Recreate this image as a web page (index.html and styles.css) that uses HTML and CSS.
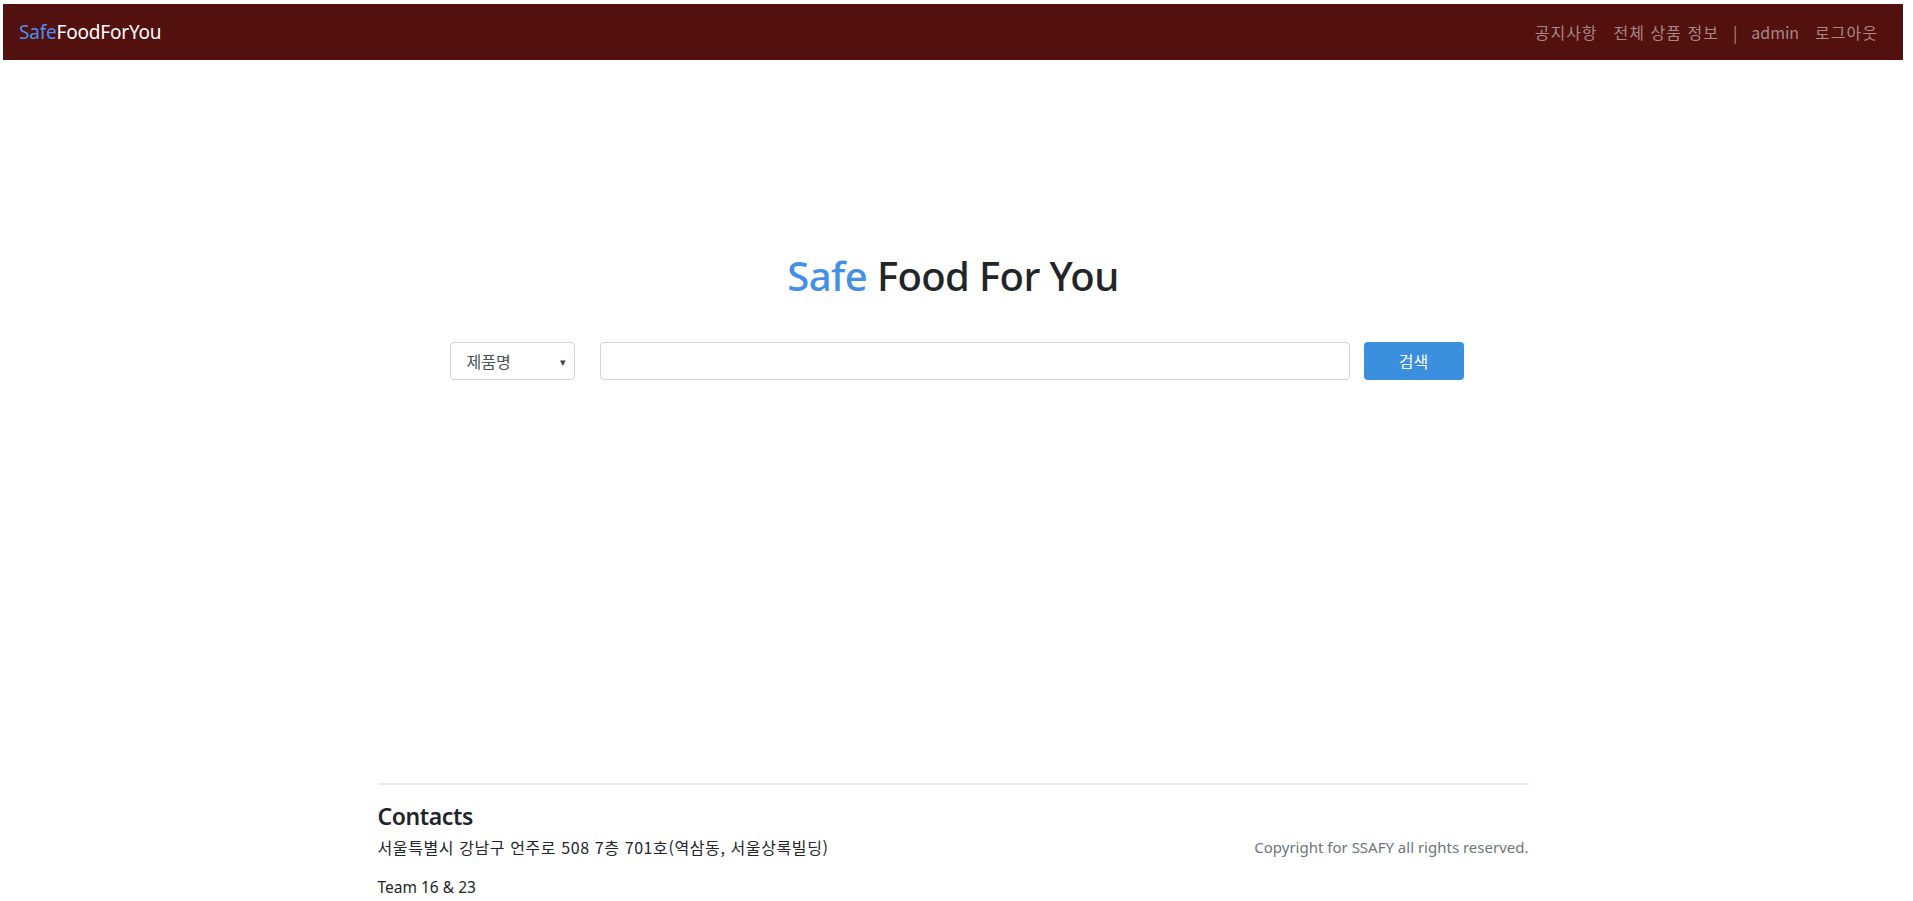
FILE: index.html
```html
<!DOCTYPE html>
<html lang="ko">
<head>
<meta charset="utf-8">
<title>SafeFoodForYou</title>
<link rel="stylesheet" href="styles.css">
</head>
<body>
<div class="page">
  <nav class="navbar">
    <a class="brand" href="#"><span class="blue">Safe</span>FoodForYou</a>
    <ul class="nav-links">
      <li><a class="ko" href="#">공지사항</a></li>
      <li><a class="ko" href="#">전체 상품 정보</a></li>
      <li class="sep">|</li>
      <li><a href="#">admin</a></li>
      <li><a class="ko" href="#">로그아웃</a></li>
    </ul>
  </nav>

  <main class="main">
    <h1 class="title"><span class="blue">Safe</span> Food For You</h1>
    <form class="search">
      <div class="select">
        <span>제품명</span>
        <span class="caret">&#9662;</span>
      </div>
      <input class="search-input" type="text">
      <button class="btn" type="button">검색</button>
    </form>
  </main>

  <footer class="footer">
    <div class="footer-inner">
      <div class="contacts">
        <h4>Contacts</h4>
        <p class="addr">서울특별시 강남구 언주로 508 7층 701호(역삼동, 서울상록빌딩)</p>
        <p class="team">Team 16 &amp; 23</p>
      </div>
      <p class="copy">Copyright for SSAFY all rights reserved.</p>
    </div>
  </footer>
</div>
</body>
</html>
```

FILE: styles.css
```css
* { box-sizing: border-box; }
html, body { margin: 0; padding: 0; background: #fff; }
body {
  font-family: "Noto Sans", "Noto Sans CJK KR", sans-serif;
  color: #212529;
  font-size: 16px;
}
.page {
  padding: 4px 10px 0 3px;
}
.blue { color: #4390e6; }

.navbar {
  height: 56px;
  background: #52100e;
  display: flex;
  align-items: center;
  justify-content: space-between;
  padding: 0 25px 0 16px;
}
.brand {
  color: #fff;
  text-decoration: none;
  font-size: 19px;
  letter-spacing: -0.2px;
}
.brand .blue { color: #4a8ff0; }
.nav-links {
  list-style: none;
  margin: 0;
  padding: 0;
  display: flex;
  align-items: center;
  gap: 16px;
  font-family: "Noto Sans CJK KR", "Noto Sans", sans-serif;
  font-size: 16px;
}
.nav-links a, .nav-links .sep {
  color: #a98887;
  text-decoration: none;
}
.nav-links .ko { letter-spacing: 1px; }
.nav-links .sep { margin: 0 -2px; }

.main {
  height: 723px;
  padding-top: 192px;
  display: flex;
  flex-direction: column;
  align-items: center;
}
.title {
  margin: 0;
  font-size: 40px;
  font-weight: 500;
  line-height: 48px;
  letter-spacing: -0.6px;
}
.search {
  margin-top: 42px;
  display: flex;
  align-items: center;
  margin-left: 7px;
}
.select {
  width: 125px;
  height: 38px;
  border: 1px solid #ced4da;
  border-radius: 4px;
  display: flex;
  align-items: center;
  justify-content: space-between;
  padding: 0 8px 0 16px;
  font-family: "Noto Sans CJK KR", sans-serif;
  font-size: 16px;
  color: #495057;
}
.caret { font-size: 11px; color: #444; }
.search-input {
  margin-left: 25px;
  width: 750px;
  height: 38px;
  border: 1px solid #ced4da;
  border-radius: 4px;
  outline: none;
}
.btn {
  margin-left: 14px;
  width: 100px;
  height: 38px;
  border: none;
  border-radius: 4px;
  background: #3b8fdf;
  color: #fff;
  font-family: "Noto Sans CJK KR", sans-serif;
  font-size: 16px;
}

.footer {
  display: flex;
  justify-content: center;
}
.footer-inner {
  width: 1151px;
  border-top: 2px solid #e9ecef;
  display: flex;
  justify-content: space-between;
  align-items: flex-start;
  padding-top: 17px;
}
.contacts h4 {
  margin: 0;
  font-size: 23px;
  font-weight: 600;
  line-height: 28px;
  letter-spacing: -0.4px;
}
.addr {
  margin: 5px 0 0;
  font-family: "Noto Sans CJK KR", "Noto Sans", sans-serif;
  font-size: 16px;
  letter-spacing: 0.6px;
  line-height: 24px;
}
.team {
  margin: 16px 0 0;
  font-size: 15.5px;
  line-height: 24px;
}
.copy {
  margin: 33px 0 0;
  color: #6c757d;
  font-size: 15px;
  line-height: 24px;
}
```
